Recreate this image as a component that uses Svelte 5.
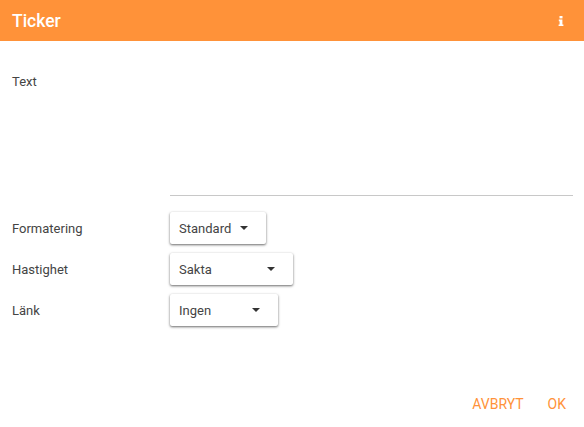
<script>
  const rows = [
    { label: "Formatering", value: "Standard", width: 96 },
    { label: "Hastighet", value: "Sakta", width: 123 },
    { label: "Länk", value: "Ingen", width: 108 }
  ];
</script>

<div class="dialog">
  <header>
    <h2>Ticker</h2>
    <svg class="info" width="6" height="10" viewBox="0 0 6 10">
      <rect x="1.5" y="0" width="3" height="2.4" fill="#fff" />
      <path d="M0.8 3.6H4.4V8.4H5.4V10H0.6V8.4H1.6V5.2H0.8Z" fill="#fff" />
    </svg>
  </header>

  <div class="form">
    <div class="text-row">
      <span class="label">Text</span>
      <div class="textarea"></div>
    </div>
    {#each rows as row}
      <div class="row">
        <span class="label">{row.label}</span>
        <div class="select" style="width: {row.width}px">
          <span>{row.value}</span>
          <i class="caret"></i>
        </div>
      </div>
    {/each}
  </div>

  <footer>
    <button>AVBRYT</button>
    <button>OK</button>
  </footer>
</div>

<style>
  :global(body) {
    background: #fff;
  }
  .dialog {
    width: 584px;
    height: 427px;
    font-family: Roboto, "Liberation Sans", sans-serif;
    font-size: 13px;
    color: #444;
    display: flex;
    flex-direction: column;
  }
  header {
    height: 41px;
    background: #ff9239;
    color: #fff;
    display: flex;
    align-items: center;
    justify-content: space-between;
    padding: 0 20px 0 12px;
  }
  h2 {
    margin: 0;
    font-size: 17.5px;
    font-weight: 500;
  }
  .form {
    padding: 33px 11px 0 12px;
  }
  .text-row {
    display: flex;
    height: 122px;
    margin-bottom: 16px;
  }
  .text-row .label {
    line-height: 16px;
  }
  .textarea {
    flex: 1;
    border-bottom: 1px solid #c8c8c8;
  }
  .label {
    width: 158px;
    flex: none;
  }
  .row {
    display: flex;
    align-items: center;
    height: 32px;
    margin-bottom: 9px;
  }
  .select {
    height: 32px;
    box-sizing: border-box;
    padding: 0 9px;
    display: flex;
    align-items: center;
    justify-content: space-between;
    background: #fff;
    border-radius: 2px;
    box-shadow: 0 1px 3px rgba(0, 0, 0, 0.35), 0 1px 2px rgba(0, 0, 0, 0.3);
  }
  .caret {
    width: 0;
    height: 0;
    margin-right: 9px;
    border-left: 4px solid transparent;
    border-right: 4px solid transparent;
    border-top: 4px solid #333;
  }
  footer {
    margin-top: auto;
    display: flex;
    justify-content: flex-end;
    gap: 24px;
    padding: 0 18px 15px 0;
  }
  button {
    border: 0;
    background: none;
    padding: 0;
    font: inherit;
    font-size: 14px;
    line-height: 16px;
    color: #ff9239;
  }
</style>
